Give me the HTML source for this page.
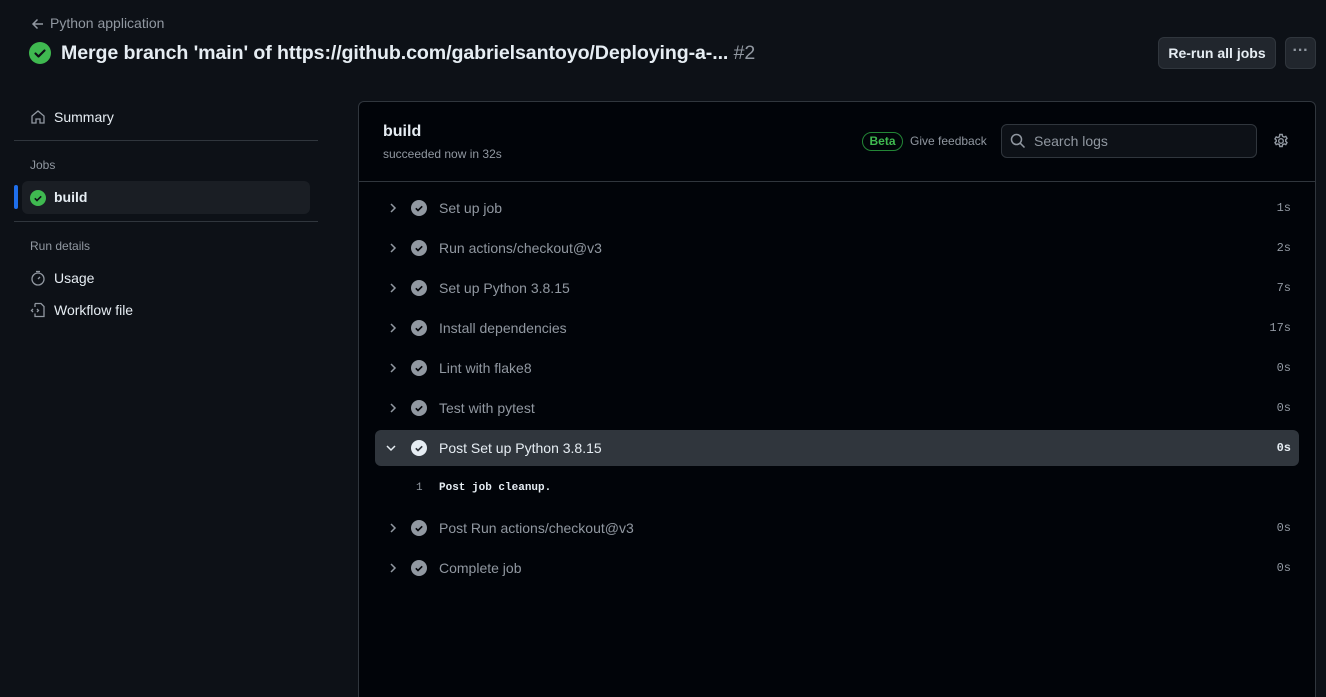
<!DOCTYPE html><html><head><style>
*{box-sizing:border-box;margin:0;padding:0}
html,body{width:1326px;height:697px;overflow:hidden}
body{background:#0d1117;font-family:"Liberation Sans",sans-serif;color:#e6edf3;position:relative}
.a{position:absolute;white-space:nowrap}
.mono{font-family:"Liberation Mono",monospace}
.row{position:absolute;left:375px;width:924px;height:36px}
.row .t{position:absolute;left:64px;top:10px;font-size:14px;color:#9198a1}
.row .d{position:absolute;right:8px;top:11px;font-size:12px;color:#9198a1}
.row svg.c{position:absolute;left:13px;top:12px}
.row svg.i{position:absolute;left:36px;top:10px}
</style></head><body>
<svg class="a" style="left:31px;top:17px" width="14" height="14" viewBox="0 0 14 14" fill="none" stroke="#9198a1" stroke-width="1.5"><path d="M12 7H2M6.5 2.5L2 7l4.5 4.5"/></svg>
<div class="a" style="left:50px;top:15px;font-size:14px;color:#9198a1">Python application</div>
<svg class="a" style="left:29px;top:42px" width="22" height="22" viewBox="0 0 22 22"><circle cx="11" cy="11" r="11" fill="#3fb950"/><path d="M6.5 11.5l3 3 6-6" stroke="#0d1117" stroke-width="2.2" fill="none" stroke-linecap="round" stroke-linejoin="round"/></svg>
<div class="a" style="left:61px;top:42px;font-size:19.6px;font-weight:bold;letter-spacing:-0.1px">Merge branch 'main' of https://github.com/gabrielsantoyo/Deploying-a-... <span style="font-weight:normal;color:#9198a1">#2</span></div>
<div class="a" style="left:1158px;top:37px;width:118px;height:32px;border:1px solid #30363d;border-radius:6px;background:#21262d;font-size:14px;font-weight:bold;text-align:center;line-height:30px">Re-run all jobs</div>
<div class="a" style="left:1285px;top:37px;width:31px;height:32px;border:1px solid #30363d;border-radius:6px;background:#21262d;text-align:center;line-height:26px;color:#9198a1;font-weight:bold">···</div>

<svg class="a" style="left:30px;top:109px" width="16" height="16" viewBox="0 0 16 16" fill="none" stroke="#9198a1" stroke-width="1.3"><path d="M2 7l6-5 6 5v7H10v-4H6v4H2z"/></svg>
<div class="a" style="left:54px;top:109px;font-size:14px">Summary</div>
<div class="a" style="left:14px;top:140px;width:304px;height:1px;background:#30363d"></div>
<div class="a" style="left:30px;top:158px;font-size:12px;color:#9198a1">Jobs</div>
<div class="a" style="left:22px;top:181px;width:288px;height:33px;border-radius:6px;background:#1a1e24"></div>
<div class="a" style="left:14px;top:185px;width:4px;height:24px;border-radius:2px;background:#1f6feb"></div>
<svg class="a" style="left:30px;top:190px" width="16" height="16" viewBox="0 0 16 16"><circle cx="8" cy="8" r="8" fill="#3fb950"/><path d="M4.8 8.3l2.2 2.2 4.2-4.2" stroke="#0d1117" stroke-width="1.6" fill="none"/></svg>
<div class="a" style="left:54px;top:189px;font-size:14px;font-weight:bold">build</div>
<div class="a" style="left:14px;top:221px;width:304px;height:1px;background:#30363d"></div>
<div class="a" style="left:30px;top:239px;font-size:12px;color:#9198a1">Run details</div>
<svg class="a" style="left:30px;top:270px" width="16" height="16" viewBox="0 0 16 16" fill="none" stroke="#9198a1" stroke-width="1.3"><circle cx="8" cy="9" r="6"/><path d="M6 1.5h4M8 9l2-2"/></svg>
<div class="a" style="left:54px;top:270px;font-size:14px">Usage</div>
<svg class="a" style="left:30px;top:302px" width="16" height="16" viewBox="0 0 16 16" fill="none" stroke="#9198a1" stroke-width="1.3"><path d="M5 1.5h6l3 3v10H5v-3M5 5V1.5M3 7L1.5 8.5 3 10M7 7l1.5 1.5L7 10"/></svg>
<div class="a" style="left:54px;top:302px;font-size:14px">Workflow file</div>

<div class="a" style="left:358px;top:101px;width:958px;height:610px;background:#010409;border:1px solid #30363d;border-radius:6px"></div>
<div class="a" style="left:359px;top:181px;width:956px;height:1px;background:#30363d"></div>
<div class="a" style="left:383px;top:123px;font-size:16px;font-weight:bold">build</div>
<div class="a" style="left:383px;top:147px;font-size:12px;color:#9198a1">succeeded now in 32s</div>
<div class="a" style="left:862px;top:132px;width:41px;height:19px;border:1px solid #238636;border-radius:10px;color:#3fb950;font-size:12px;font-weight:bold;text-align:center;line-height:17px">Beta</div>
<div class="a" style="left:910px;top:134px;font-size:12px;color:#9198a1">Give feedback</div>
<div class="a" style="left:1001px;top:124px;width:256px;height:34px;border:1px solid #30363d;border-radius:6px;background:#0d1117"></div>
<svg class="a" style="left:1010px;top:133px" width="16" height="16" viewBox="0 0 16 16" fill="none" stroke="#9198a1" stroke-width="1.5"><circle cx="6.5" cy="6.5" r="5"/><path d="M10.2 10.2L14.5 14.5"/></svg>
<div class="a" style="left:1034px;top:133px;font-size:14px;color:#9198a1">Search logs</div>
<svg class="a" style="left:1273px;top:133px" width="16" height="16" viewBox="0 0 16 16" fill="none" stroke="#9198a1" stroke-width="1.4"><circle cx="8" cy="8" r="2.3"/><path d="M6.8 1.5h2.4l.4 1.8 1.5.8 1.7-.7 1.2 2-1.3 1.3v1.6l1.3 1.3-1.2 2-1.7-.7-1.5.8-.4 1.8H6.8l-.4-1.8-1.5-.8-1.7.7-1.2-2 1.3-1.3V7.2L2 5.9l1.2-2 1.7.7 1.5-.8z"/></svg>

<div class="row" style="top:190px"><svg class="c" width="10" height="12" viewBox="0 0 10 12"><path d="M3 2l4 4-4 4" stroke="#9198a1" stroke-width="1.5" fill="none"/></svg><svg class="i" width="16" height="16" viewBox="0 0 16 16"><circle cx="8" cy="8" r="8" fill="#9198a1"/><path d="M4.8 8.3l2.2 2.2 4.2-4.2" stroke="#010409" stroke-width="1.6" fill="none"/></svg><span class="t">Set up job</span><span class="d mono">1s</span></div>
<div class="row" style="top:230px"><svg class="c" width="10" height="12" viewBox="0 0 10 12"><path d="M3 2l4 4-4 4" stroke="#9198a1" stroke-width="1.5" fill="none"/></svg><svg class="i" width="16" height="16" viewBox="0 0 16 16"><circle cx="8" cy="8" r="8" fill="#9198a1"/><path d="M4.8 8.3l2.2 2.2 4.2-4.2" stroke="#010409" stroke-width="1.6" fill="none"/></svg><span class="t">Run actions/checkout@v3</span><span class="d mono">2s</span></div>
<div class="row" style="top:270px"><svg class="c" width="10" height="12" viewBox="0 0 10 12"><path d="M3 2l4 4-4 4" stroke="#9198a1" stroke-width="1.5" fill="none"/></svg><svg class="i" width="16" height="16" viewBox="0 0 16 16"><circle cx="8" cy="8" r="8" fill="#9198a1"/><path d="M4.8 8.3l2.2 2.2 4.2-4.2" stroke="#010409" stroke-width="1.6" fill="none"/></svg><span class="t">Set up Python 3.8.15</span><span class="d mono">7s</span></div>
<div class="row" style="top:310px"><svg class="c" width="10" height="12" viewBox="0 0 10 12"><path d="M3 2l4 4-4 4" stroke="#9198a1" stroke-width="1.5" fill="none"/></svg><svg class="i" width="16" height="16" viewBox="0 0 16 16"><circle cx="8" cy="8" r="8" fill="#9198a1"/><path d="M4.8 8.3l2.2 2.2 4.2-4.2" stroke="#010409" stroke-width="1.6" fill="none"/></svg><span class="t">Install dependencies</span><span class="d mono">17s</span></div>
<div class="row" style="top:350px"><svg class="c" width="10" height="12" viewBox="0 0 10 12"><path d="M3 2l4 4-4 4" stroke="#9198a1" stroke-width="1.5" fill="none"/></svg><svg class="i" width="16" height="16" viewBox="0 0 16 16"><circle cx="8" cy="8" r="8" fill="#9198a1"/><path d="M4.8 8.3l2.2 2.2 4.2-4.2" stroke="#010409" stroke-width="1.6" fill="none"/></svg><span class="t">Lint with flake8</span><span class="d mono">0s</span></div>
<div class="row" style="top:390px"><svg class="c" width="10" height="12" viewBox="0 0 10 12"><path d="M3 2l4 4-4 4" stroke="#9198a1" stroke-width="1.5" fill="none"/></svg><svg class="i" width="16" height="16" viewBox="0 0 16 16"><circle cx="8" cy="8" r="8" fill="#9198a1"/><path d="M4.8 8.3l2.2 2.2 4.2-4.2" stroke="#010409" stroke-width="1.6" fill="none"/></svg><span class="t">Test with pytest</span><span class="d mono">0s</span></div>
<div class="row" style="top:430px;background:#30363d;border-radius:6px"><svg class="c" width="12" height="12" viewBox="0 0 12 12" style="left:10px"><path d="M2 4l4 4 4-4" stroke="#e6edf3" stroke-width="1.5" fill="none"/></svg><svg class="i" width="16" height="16" viewBox="0 0 16 16"><circle cx="8" cy="8" r="8" fill="#e6edf3"/><path d="M4.8 8.3l2.2 2.2 4.2-4.2" stroke="#30363d" stroke-width="1.6" fill="none"/></svg><span class="t" style="color:#e6edf3">Post Set up Python 3.8.15</span><span class="d mono" style="color:#e6edf3;font-weight:bold">0s</span></div>
<div class="a mono" style="left:416px;top:482px;font-size:11px;color:#9198a1">1</div>
<div class="a mono" style="left:439px;top:482px;font-size:11px;font-weight:bold;color:#e6edf3">Post job cleanup.</div>
<div class="row" style="top:510px"><svg class="c" width="10" height="12" viewBox="0 0 10 12"><path d="M3 2l4 4-4 4" stroke="#9198a1" stroke-width="1.5" fill="none"/></svg><svg class="i" width="16" height="16" viewBox="0 0 16 16"><circle cx="8" cy="8" r="8" fill="#9198a1"/><path d="M4.8 8.3l2.2 2.2 4.2-4.2" stroke="#010409" stroke-width="1.6" fill="none"/></svg><span class="t">Post Run actions/checkout@v3</span><span class="d mono">0s</span></div>
<div class="row" style="top:550px"><svg class="c" width="10" height="12" viewBox="0 0 10 12"><path d="M3 2l4 4-4 4" stroke="#9198a1" stroke-width="1.5" fill="none"/></svg><svg class="i" width="16" height="16" viewBox="0 0 16 16"><circle cx="8" cy="8" r="8" fill="#9198a1"/><path d="M4.8 8.3l2.2 2.2 4.2-4.2" stroke="#010409" stroke-width="1.6" fill="none"/></svg><span class="t">Complete job</span><span class="d mono">0s</span></div>
</body></html>
